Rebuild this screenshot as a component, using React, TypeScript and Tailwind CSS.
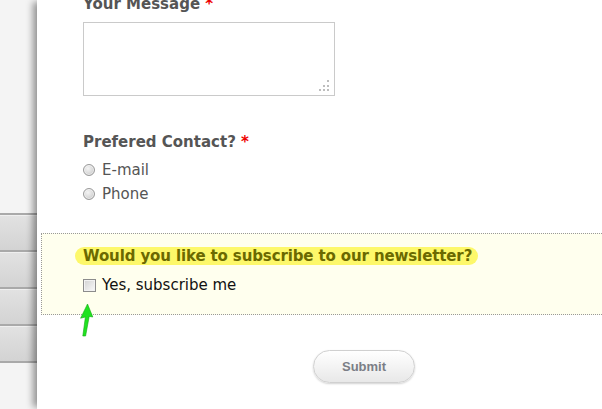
import React from "react";

const sideTabs = ["one", "two", "three", "four"];

const gripDots = [
  { x: 8, y: 0 },
  { x: 4, y: 5 },
  { x: 8, y: 5 },
  { x: 0, y: 9 },
  { x: 4, y: 9 },
  { x: 8, y: 9 },
];

function Radio({ label }: { label: string }) {
  return (
    <label className="flex h-[24px] items-center gap-[7px] text-[15px] leading-[24px] text-[#555]">
      <input
        type="radio"
        name="contact"
        className="m-0 h-[12px] w-[12px] appearance-none rounded-full border border-[#9a9a9a] bg-[radial-gradient(circle_at_40%_35%,#f4f4f4_0%,#dcdcdc_50%,#bcbcbc_100%)] shadow-[inset_0_0_0_1px_rgba(255,255,255,0.6)]"
      />
      {label}
    </label>
  );
}

export default function App() {
  return (
    <div className="flex h-[409px] w-[602px] overflow-hidden bg-white font-['DejaVu_Sans',sans-serif]">
      {/* Left nav strip */}
      <aside className="flex w-[37px] shrink-0 flex-col bg-[#f4f4f4] pt-[213px]">
        {sideTabs.map((t) => (
          <div
            key={t}
            className="h-[37px] border-t-2 border-[#a9a9a9] bg-gradient-to-b from-[#e2e2e2] to-[#d3d3d3] shadow-[inset_0_1px_0_#efefef]"
          />
        ))}
        <div className="border-t-2 border-[#a9a9a9]" />
      </aside>

      {/* Form panel */}
      <main className="relative z-10 flex-1 shadow-[-6px_0_7px_-2px_rgba(0,0,0,0.4)]">
        <div className="-mt-[5px] pl-[46px]">
          <div className="text-[15px] font-bold leading-[18px] text-[#555]">
            Your Message <span className="text-[#e00]">*</span>
          </div>
          <div className="relative mt-[9px] h-[74px] w-[252px]">
            <textarea className="h-full w-full resize-none border border-[#cacaca] bg-white outline-none" />
            <div className="absolute bottom-[5px] right-[5px] h-[11px] w-[11px]">
              {gripDots.map((d, i) => (
                <span
                  key={i}
                  className="absolute h-[2px] w-[2px] bg-[#bdbdbd]"
                  style={{ left: d.x, top: d.y }}
                />
              ))}
            </div>
          </div>

          <div className="mt-[37px] text-[15px] font-bold leading-[18px] text-[#555]">
            Prefered Contact? <span className="text-[#e00]">*</span>
          </div>
          <div className="mt-[7px] flex flex-col">
            <Radio label="E-mail" />
            <Radio label="Phone" />
          </div>
        </div>

        {/* Newsletter box */}
        <div className="relative ml-[4px] -mr-[10px] mt-[27px] border border-dotted border-[#999] bg-[#ffffee] pb-[20px] pl-[41px] pt-[13px]">
          <span className="-ml-2 block h-[18px] w-fit rounded-full bg-[#fdf86a] pl-2 pr-[6px] text-[15px] font-bold leading-[18px] tracking-[-0.12px] text-[#6b6900]">
            Would you like to subscribe to our newsletter?
          </span>
          <label className="mt-[11px] flex h-[18px] items-center gap-[6px] text-[15px] leading-[18px] text-[#111]">
            <input
              type="checkbox"
              className="m-0 h-[13px] w-[13px] appearance-none border border-[#8c8c8c] bg-gradient-to-br from-[#d2d2d2] to-[#fafafa] shadow-[inset_0_0_0_1px_#f2f2f2]"
            />
            Yes, subscribe me
          </label>

          <svg
            className="absolute left-[37px] top-[69px] h-[34px] w-[15px]"
            viewBox="0 0 15 34"
          >
            <path
              d="M8.5 1 L13.8 14 L10.2 13.4 L6.6 33 L3.8 33 L6.4 14 L1.6 15.2 Z"
              fill="#1fe31f"
              stroke="#14a814"
              strokeWidth="0.6"
              strokeLinejoin="round"
            />
          </svg>
        </div>

        <button className="ml-[276px] mt-[35px] h-[33px] w-[102px] rounded-full border border-[#d0d0d0] bg-gradient-to-b from-white to-[#e8e8e8] font-['Liberation_Sans',sans-serif] text-[13px] font-bold text-[#7b7e86] shadow-[0_1px_2px_rgba(0,0,0,0.18)]">
          Submit
        </button>
      </main>
    </div>
  );
}
